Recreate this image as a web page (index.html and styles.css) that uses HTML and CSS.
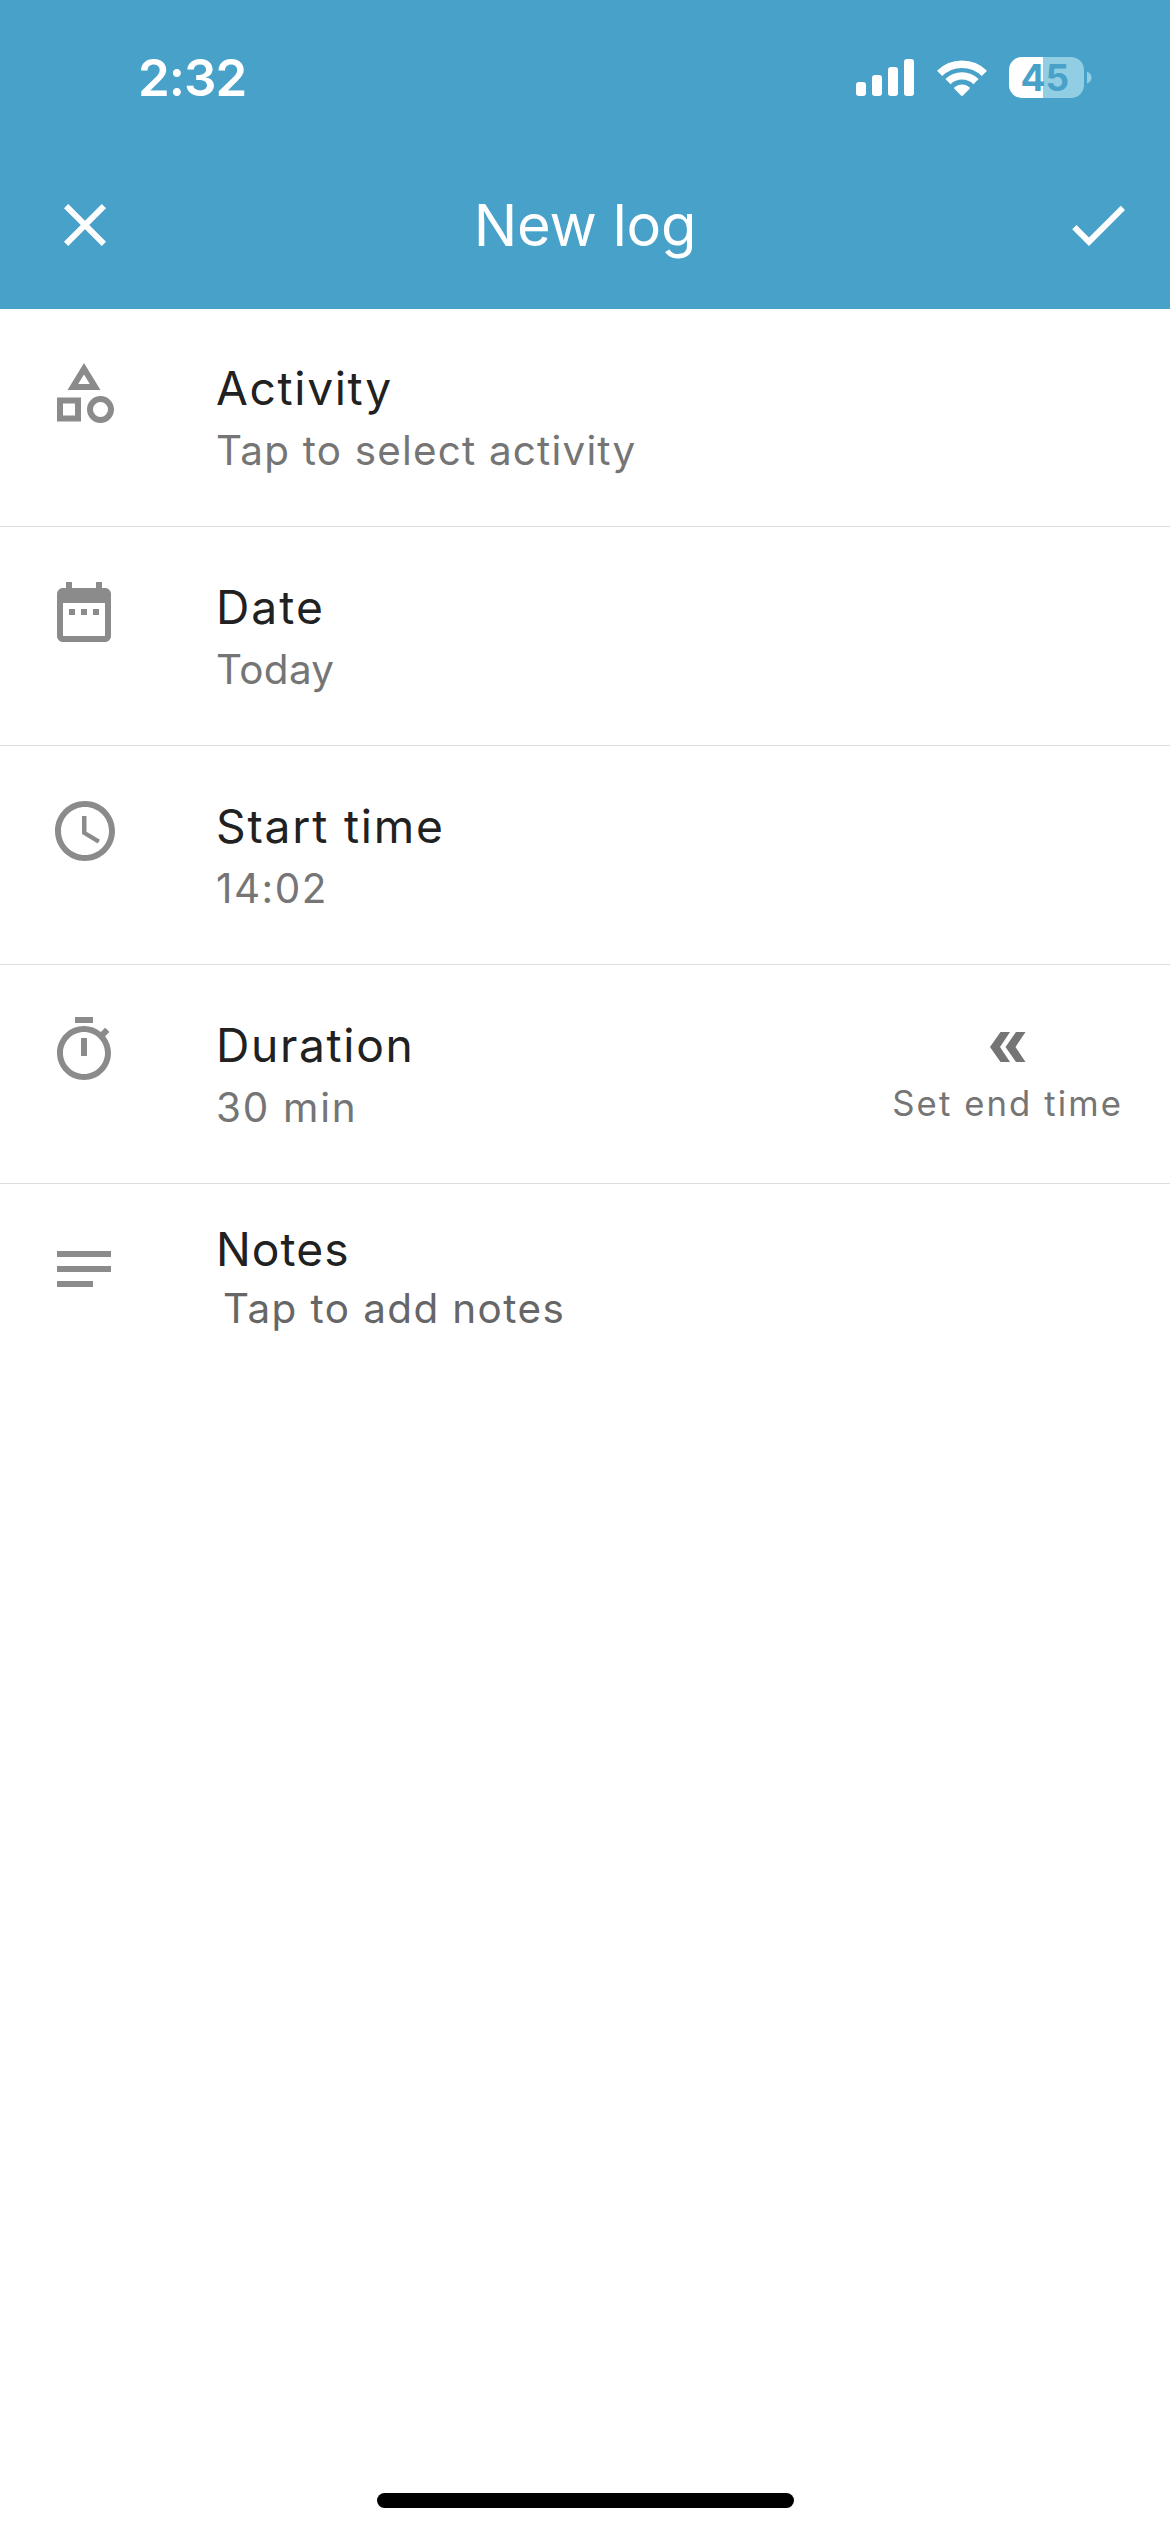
FILE: index.html
```html
<!DOCTYPE html>
<html lang="en">
<head>
<meta charset="utf-8">
<title>New log</title>
<link rel="stylesheet" href="styles.css">
</head>
<body>
<div class="screen">
  <header class="header">
    <div class="status">
      <span class="status-time">2:32</span>
      <div class="status-icons">
        <svg class="signal" viewBox="0 0 58 37" fill="#fff">
          <rect x="0" y="23" width="10" height="14" rx="3"/>
          <rect x="16" y="16" width="10" height="21" rx="3"/>
          <rect x="32" y="8" width="10" height="29" rx="3"/>
          <rect x="48" y="0" width="10" height="37" rx="3"/>
        </svg>
        <svg class="wifi" viewBox="0 0 50 37">
          <g fill="none" stroke="#fff" stroke-width="7.4">
            <path d="M2.6 14.4A32 32 0 0 1 47.4 14.4"/>
            <path d="M11 22.6A20 20 0 0 1 39 22.6"/>
          </g>
          <path fill="#fff" d="M24 36.5 17.6 30q-1-1.200.3-2.100Q25 23.300 32.100 27.900q1.300.9.3 2.100L26 36.500q-1 .9-2 0Z"/>
        </svg>
        <svg class="battery" viewBox="0 0 83 41">
          <path fill="#91cde3" d="M34 0H62a13 13 0 0 1 13 13V28a13 13 0 0 1-13 13H34Z"/>
          <path fill="#fff" d="M34 0H13A13 13 0 0 0 0 13V28A13 13 0 0 0 13 41H34Z"/>
          <path fill="#91cde3" d="M78 14.500q4.500 2 4.500 6t-4.500 6Z"/>
          <text class="battery-level" x="11.500" y="34">45</text>
        </svg>
      </div>
    </div>
    <nav class="toolbar">
      <svg class="icon close" viewBox="0 0 24 24"><path d="M19 6.410 17.590 5 12 10.590 6.410 5 5 6.410 10.590 12 5 17.590 6.410 19 12 13.410 17.590 19 19 17.590 13.410 12z"/></svg>
      <h1 class="title">New log</h1>
      <svg class="icon confirm" viewBox="0 0 24 24"><path d="M9 16.170 4.830 12l-1.420 1.410L9 19 21 7l-1.410-1.410z"/></svg>
    </nav>
  </header>

  <main class="list">
    <section class="row">
      <svg class="icon" viewBox="0 0 24 24"><path fill-rule="evenodd" d="M12 2 6.500 11h11L12 2zm0 3.840L13.930 9h-3.870L12 5.840zM17.500 13c-2.490 0-4.500 2.010-4.500 4.500s2.010 4.500 4.500 4.500 4.500-2.010 4.500-4.500-2.010-4.500-4.500-4.500zm0 7a2.500 2.500 0 0 1 0-5 2.500 2.500 0 0 1 0 5zM3 21.500h8v-8H3v8zm2-6h4v4H5v-4z"/></svg>
      <div class="text">
        <div class="label label-activity">Activity</div>
        <div class="value value-activity">Tap to select activity</div>
      </div>
    </section>
    <section class="row">
      <svg class="icon" viewBox="0 0 24 24"><path fill-rule="evenodd" d="M9 11H7v2h2v-2zm4 0h-2v2h2v-2zm4 0h-2v2h2v-2zm2-7h-1V2h-2v2H8V2H6v2H5c-1.110 0-1.990.9-1.990 2L3 20c0 1.100.890 2 2 2h14c1.100 0 2-.9 2-2V6c0-1.100-.9-2-2-2zm0 16H5V9h14v11z"/></svg>
      <div class="text">
        <div class="label label-date">Date</div>
        <div class="value value-date">Today</div>
      </div>
    </section>
    <section class="row">
      <svg class="icon icon-clock" viewBox="0 0 24 24"><path d="M11.990 2C6.470 2 2 6.480 2 12s4.470 10 9.990 10C17.520 22 22 17.520 22 12S17.520 2 11.990 2zM12 20c-4.420 0-8-3.580-8-8s3.580-8 8-8 8 3.580 8 8-3.580 8-8 8zm.5-13H11v6l5.250 3.150.750-1.230-4.500-2.670z"/></svg>
      <div class="text">
        <div class="label label-start">Start time</div>
        <div class="value value-start">14:02</div>
      </div>
    </section>
    <section class="row">
      <svg class="icon" viewBox="0 0 24 24"><path d="M15 1H9v2h6V1zm-4 13h2V8h-2v6zm8.030-6.610 1.420-1.420c-.430-.510-.9-.990-1.410-1.410l-1.420 1.420C16.070 4.740 14.120 4 12 4c-4.970 0-9 4.030-9 9s4.020 9 9 9 9-4.030 9-9c0-2.120-.740-4.070-1.970-5.610zM12 20c-3.870 0-7-3.130-7-7s3.130-7 7-7 7 3.130 7 7-3.130 7-7 7z"/></svg>
      <div class="text">
        <div class="label label-duration">Duration</div>
        <div class="value value-duration">30 min</div>
      </div>
      <div class="end-time">
        <svg class="chevrons" viewBox="0 0 36 30"><path d="M10.500 0H20L10 15 20 30H10.500L0 15ZM26 0H35.500L25.500 15 35.500 30H26L15.500 15Z"/></svg>
        <span class="end-time-label">Set end time</span>
      </div>
    </section>
    <section class="row row-notes">
      <svg class="icon" viewBox="0 0 24 24"><path d="M3 18h12v-2H3v2zM3 6v2h18V6H3zm0 7h18v-2H3v2z"/></svg>
      <div class="text">
        <div class="label label-notes">Notes</div>
        <div class="value value-notes">Tap to add notes</div>
      </div>
    </section>
  </main>

  <footer class="footer"><div class="home-indicator"></div></footer>
</div>
</body>
</html>
```
FILE: styles.css
```css
* { box-sizing: border-box; }

body {
  margin: 0;
  background: #fff;
  font-family: Inter, sans-serif;
}

.screen {
  display: flex;
  flex-direction: column;
  width: 1170px;
  height: 2532px;
  overflow: hidden;
}

/* Header */
.header {
  flex: none;
  height: 309px;
  background: #48a1c8;
  color: #fff;
}

.status {
  display: flex;
  align-items: center;
  justify-content: space-between;
  height: 141px;
  padding: 14px 78px 0 138px;
}

.status-time {
  font: 600 51px/60px Inter, sans-serif;
  letter-spacing: -1px;
}

.status-icons {
  display: flex;
  align-items: center;
  gap: 22.5px;
}

.signal { width: 58px; height: 37px; }
.wifi { width: 50px; height: 37px; }
.battery { width: 83px; height: 41px; overflow: visible; }

.battery-level {
  fill: #48a1c8;
  font: 700 37px Inter, sans-serif;
}

.toolbar {
  display: grid;
  grid-template-columns: 1fr auto 1fr;
  align-items: center;
  height: 168px;
}

.title {
  margin: 0;
  font-size: 57.8px;
  font-weight: 400;
  line-height: 72px;
  letter-spacing: -0.2px;
}

.icon {
  flex: none;
  width: 72px;
  height: 72px;
  fill: #8b8b8b;
}

.close { margin-left: 49px; fill: #fff; }
.confirm { margin-right: 36px; justify-self: end; fill: #fff; }

/* Form rows */
.list {
  flex: 1;
  margin-top: -1px;
}

.row {
  display: flex;
  align-items: flex-start;
  height: 219px;
  padding: 49px 47px 0 48px;
  border-bottom: 1px solid #dedede;
}

.row:first-child {
  border-top: 1px solid #48a1c8;
  padding-top: 48px;
}

.row-notes { border-bottom: 0; }

.text {
  flex: 1;
  padding-top: 4px;
  margin-left: 96px;
}

.icon-clock { margin: 0 -1px 0 1px; }

.label {
  margin-bottom: 2px;
  color: #212121;
  font-size: 46.2px;
  line-height: 54px;
}

.value {
  color: #757575;
  font-size: 40.4px;
  line-height: 68px;
}

.label-activity { letter-spacing: 1.65px; }
.value-activity { letter-spacing: 1.2px; }
.label-date { letter-spacing: 2px; }
.value-date { letter-spacing: 0.35px; }
.label-start { letter-spacing: 1.8px; }
.value-start { letter-spacing: 1.52px; }
.label-duration { letter-spacing: 1.65px; }
.value-duration { letter-spacing: 1.74px; }
.label-notes { letter-spacing: 1.06px; }

.value-notes {
  padding-left: 7px;
  color: #666;
  line-height: 61px;
  letter-spacing: 1.41px;
}

.row-notes .text { margin-top: -15px; }

.end-time {
  display: flex;
  flex-direction: column;
  align-items: center;
  gap: 19px;
  padding-top: 18px;
  color: #757575;
}

.chevrons { width: 36px; height: 30px; fill: #757575; }

.end-time-label {
  font-size: 34.7px;
  line-height: 44px;
  letter-spacing: 2.09px;
}

/* Home indicator */
.footer {
  display: flex;
  justify-content: center;
  height: 39px;
}

.home-indicator {
  width: 417px;
  height: 15px;
  border-radius: 8px;
  background: #000;
}
```
